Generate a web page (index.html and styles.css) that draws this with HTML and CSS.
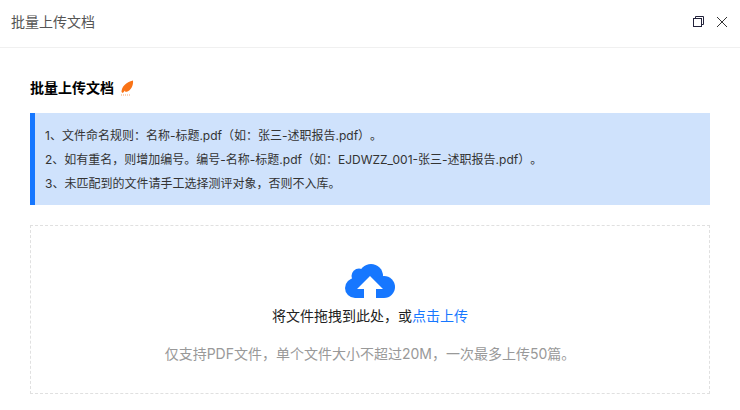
FILE: index.html
```html
<!DOCTYPE html>
<html lang="zh-CN">
<head>
<meta charset="utf-8">
<title>批量上传文档</title>
<link rel="stylesheet" href="styles.css">
</head>
<body>
<div class="dialog">
  <header class="head">
    <span class="head-title">批量上传文档</span>
    <div class="head-tools">
      <svg class="tool" viewBox="0 0 12 12" width="12" height="12" fill="none" stroke="#22223a" stroke-width="1">
        <rect x="1.500" y="2.500" width="8" height="8"/>
        <path d="M3.500 2.500V.5h8v8h-2"/>
      </svg>
      <svg class="tool" viewBox="0 0 12 12" width="12" height="12" fill="none" stroke="#333" stroke-width="1">
        <path d="M1 1l10 10M11 1L1 11"/>
      </svg>
    </div>
  </header>
  <main class="body">
    <h2 class="title">批量上传文档
      <svg class="feather" viewBox="0 0 14 16" width="14" height="16">
        <path d="M1.500 12C1.500 7 6 2 13 .5c.5 4.500-1.500 10.500-7.500 11.500L5 10.500 2.800 13z" fill="#f97316"/>
        <path d="M1 15h9" stroke="#f9a36b" stroke-width="1" stroke-dasharray="1 1" fill="none"/>
      </svg>
    </h2>
    <div class="notice">
      <p>1、文件命名规则：名称-标题.pdf（如：张三-述职报告.pdf）。</p>
      <p>2、如有重名，则增加编号。编号-名称-标题.pdf（如：EJDWZZ_001-张三-述职报告.pdf）。</p>
      <p>3、未匹配到的文件请手工选择测评对象，否则不入库。</p>
    </div>
    <div class="drop">
      <svg class="cloud" viewBox="0 0 50 34" width="50" height="34">
        <g fill="#1677ff">
          <circle cx="26" cy="12" r="12"/>
          <circle cx="14" cy="12" r="7.500"/>
          <circle cx="10" cy="24" r="10"/>
          <circle cx="39" cy="23" r="11"/>
          <rect x="10" y="18" width="29" height="16"/>
        </g>
        <path d="M25 12L12 25h7v9h12v-9h7z" fill="#fff"/>
      </svg>
      <p class="drop-main">将文件拖拽到此处，或<a class="link">点击上传</a></p>
      <p class="drop-hint">仅支持PDF文件，单个文件大小不超过20M，一次最多上传50篇。</p>
    </div>
  </main>
</div>
</body>
</html>
```
FILE: styles.css
```css
* { box-sizing: border-box; }
html, body { margin: 0; height: 100%; }
body {
  background: #fff;
  font-family: "Inter", "Noto Sans CJK SC", sans-serif;
  text-spacing-trim: space-all;
  overflow: hidden;
}
.dialog { width: 740px; height: 410px; overflow: hidden; }
.head {
  height: 48px;
  border-bottom: 1px solid #f0f0f0;
  padding: 0 12px 3px 11px;
  display: flex;
  align-items: center;
  justify-content: space-between;
}
.head-title { font-size: 14px; line-height: 20px; color: #555; }
.head-tools { display: flex; gap: 12px; align-items: center; }
.tool { display: block; }
.body { padding: 0 30px; }
.title {
  margin: 0;
  padding-top: 31px;
  height: 65px;
  font-size: 14px;
  line-height: 18px;
  font-weight: 700;
  color: #000;
  display: flex;
  align-items: flex-start;
  gap: 6px;
}
.feather { margin-top: 1px; }
.notice {
  height: 92px;
  background: #cfe2fc;
  border-left: 5px solid #1677ff;
  padding: 11px 0 0 10px;
  font-size: 12px;
  color: #333;
}
.notice p { margin: 0; line-height: 24px; }
.drop {
  margin-top: 20px;
  height: 169px;
  border: 1px dashed #e0e0e0;
  display: flex;
  flex-direction: column;
  align-items: center;
  padding-top: 38px;
}
.cloud { display: block; }
.drop-main { margin: 8px 0 0; font-size: 14px; line-height: 20px; color: #222; }
.link { color: #1677ff; }
.drop-hint { margin: 18px 0 0; font-size: 14px; line-height: 20px; color: #999; }
```
